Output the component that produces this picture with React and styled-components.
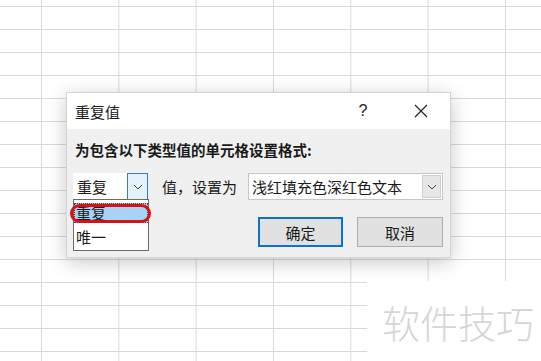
import React from "react";
import styled, { createGlobalStyle } from "styled-components";

const GlobalStyle = createGlobalStyle`
  html, body {
    margin: 0;
    padding: 0;
    width: 541px;
    height: 361px;
    overflow: hidden;
    font-family: "Noto Sans CJK SC", "Noto Sans", sans-serif;
    background: #fff;
  }
`;

const Sheet = styled.div`
  position: relative;
  width: 541px;
  height: 361px;
  background-color: #fff;
  background-image: linear-gradient(to right, #d9d9d9 1px, transparent 1px),
    linear-gradient(to bottom, #dadada 1px, transparent 1px);
  background-size: 77.33px 23px;
  background-position: 41px 6px;
`;

const Dialog = styled.div`
  position: absolute;
  left: 66px;
  top: 92px;
  width: 385px;
  height: 166px;
  display: flex;
  flex-direction: column;
  background: #f0f0f0;
  border: 1px solid #d4d4d4;
  box-sizing: border-box;
  box-shadow: 0 4px 18px rgba(0, 0, 0, 0.22);
`;

const TitleBar = styled.div`
  height: 36px;
  display: flex;
  align-items: center;
  background: #fff;
  padding-left: 8px;
  font-size: 15px;
  color: #1a1a1a;
`;

const Title = styled.div`
  flex: 1;
`;

const TitleButton = styled.div`
  width: ${(p) => p.w}px;
  display: flex;
  justify-content: center;
  align-items: center;
  font-family: "Liberation Sans", sans-serif;
  font-size: 16px;
  color: #222;
`;

const Body = styled.div`
  flex: 1;
  display: flex;
  flex-direction: column;
  padding: 11px 7px 0 6px;
`;

const Label = styled.div`
  font-size: 14.5px;
  font-weight: bold;
  color: #1a1a1a;
  margin-left: 2px;
  line-height: 20px;
  white-space: nowrap;
`;

const Row = styled.div`
  display: flex;
  align-items: center;
  margin-top: 13px;
`;

const Combo = styled.div`
  position: relative;
  flex-shrink: 0;
  width: ${(p) => p.w}px;
  height: 27px;
  box-sizing: border-box;
  display: flex;
  align-items: center;
  background: #fff;
  border: 1px solid ${(p) => (p.bordered ? "#c6c6c6" : "#fff")};
  font-size: 15px;
  color: #1a1a1a;
  padding-left: 3px;
  white-space: nowrap;
`;

const ComboText = styled.div`
  flex: 1;
`;

const Arrow = styled.div`
  width: ${(p) => p.w}px;
  height: ${(p) => p.h}px;
  margin-right: ${(p) => p.mr}px;
  box-sizing: border-box;
  display: flex;
  justify-content: center;
  align-items: center;
  background: ${(p) => (p.active ? "#e5f1fb" : "#e6e6e6")};
  border: 1px solid ${(p) => (p.active ? "#3d7db5" : "#cfcfcf")};
`;

const Between = styled.div`
  flex-shrink: 0;
  white-space: nowrap;
  font-size: 15px;
  color: #1a1a1a;
  margin: 0 11px 0 14px;
`;

const DropList = styled.div`
  position: absolute;
  left: -1px;
  top: 25px;
  width: 76px;
  height: 52px;
  box-sizing: border-box;
  background: #fff;
  border: 1px solid #6b6b6b;
  padding-top: 3px;
  display: flex;
  flex-direction: column;
  z-index: 2;
`;

const Item = styled.div`
  position: relative;
  height: 20px;
  line-height: 20px;
  padding-left: 2px;
  font-size: 15px;
  color: #1a1a1a;
  background: ${(p) => (p.selected ? "#a9d3f5" : "transparent")};
  outline: ${(p) => (p.selected ? "1px dotted #444" : "none")};
  outline-offset: -1px;
  margin-bottom: 4px;
`;

const Marker = styled.div`
  position: absolute;
  left: -4px;
  top: 1px;
  width: 81px;
  height: 19px;
  box-sizing: border-box;
  border: 3px solid #d3131a;
  border-radius: 10px;
`;

const Buttons = styled.div`
  display: flex;
  justify-content: flex-end;
  gap: 14px;
  margin-top: 17px;
`;

const Button = styled.div`
  width: ${(p) => p.w}px;
  height: 30px;
  box-sizing: border-box;
  display: flex;
  justify-content: center;
  align-items: center;
  background: #e1e1e1;
  border: ${(p) => (p.primary ? "2px solid #0f72c9" : "1px solid #adadad")};
  font-size: 15px;
  color: #1a1a1a;
`;

const Watermark = styled.div`
  position: absolute;
  left: 367px;
  top: 281px;
  right: 0;
  bottom: 0;
  background: #fff;
  display: flex;
  align-items: center;
  padding-left: 15px;
  font-size: 38px;
  font-weight: 300;
  color: #d6d6d6;
`;

const Chevron = () => (
  <svg width="10" height="6" viewBox="0 0 10 6">
    <path d="M1 1 L5 5 L9 1" fill="none" stroke="#444" strokeWidth="1" />
  </svg>
);

const CloseIcon = () => (
  <svg width="14" height="14" viewBox="0 0 14 14">
    <path d="M1 1 L13 13 M13 1 L1 13" stroke="#222" strokeWidth="1.2" />
  </svg>
);

export default function App() {
  return (
    <>
      <GlobalStyle />
      <Sheet>
        <Dialog>
          <TitleBar>
            <Title>重复值</Title>
            <TitleButton w={58}>?</TitleButton>
            <TitleButton w={58}>
              <CloseIcon />
            </TitleButton>
          </TitleBar>
          <Body>
            <Label>为包含以下类型值的单元格设置格式:</Label>
            <Row>
              <Combo w={75}>
                <ComboText>重复</ComboText>
                <Arrow active w={21} h={27} mr={-1}>
                  <Chevron />
                </Arrow>
                <DropList>
                  <Item selected>
                    重复
                    <Marker />
                  </Item>
                  <Item>唯一</Item>
                </DropList>
              </Combo>
              <Between>值，设置为</Between>
              <Combo w={195} bordered>
                <ComboText>浅红填充色深红色文本</ComboText>
                <Arrow w={19} h={23} mr={1}>
                  <Chevron />
                </Arrow>
              </Combo>
            </Row>
            <Buttons>
              <Button primary w={85}>确定</Button>
              <Button w={86}>取消</Button>
            </Buttons>
          </Body>
        </Dialog>
        <Watermark>软件技巧</Watermark>
      </Sheet>
    </>
  );
}
